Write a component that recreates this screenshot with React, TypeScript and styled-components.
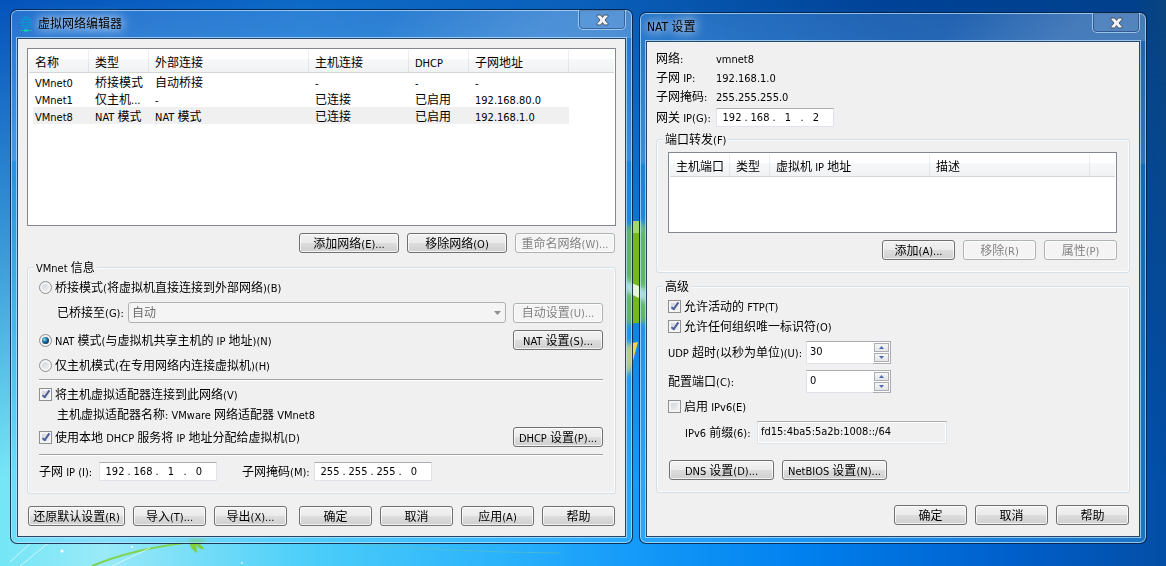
import React, { useState } from "react";
import styled, { createGlobalStyle, css } from "styled-components";

const GlobalStyle = createGlobalStyle`
  *, *::before, *::after { box-sizing: border-box; }
  body {
    margin: 0;
    color: #000;
    font: 12px/15px "DejaVu Sans Condensed", "Noto Sans CJK SC", sans-serif;
  }
  button, input, select { font: inherit; color: inherit; margin: 0; }
`;

/* ---------- Mixed Latin / Chinese text ---------- */

const Latin = styled.span`
  font-size: 11px;
`;

const Run = styled.span`
  display: inline-block;
  padding-top: 2px;
  white-space: pre;
`;

function Text({ children }: { children: string }) {
  const runs = children.split(/([\x20-\x7e]+)/).filter(Boolean);
  return (
    <Run>
      {runs.map((run, i) =>
        /^[\x20-\x7e]/.test(run) ? <Latin key={i}>{run}</Latin> : run
      )}
    </Run>
  );
}

/* ---------- Desktop ---------- */

const Desktop = styled.main`
  position: relative;
  min-height: 100vh;
  display: flex;
  align-items: flex-start;
  gap: 6px;
  padding: 9px 19px 20px 10px;
  background: linear-gradient(
    to right,
    #74e6f6 0%,
    #9aeaf8 9%,
    #4dcff9 26%,
    #2ab2fb 43%,
    #159bf9 54%,
    #0080ee 69%,
    #0060cc 86%,
    #034ea6 100%
  );

  &::before {
    content: "";
    position: absolute;
    inset: 0;
    background: linear-gradient(
      to right,
      #0452bb 0%,
      #0d68c6 26%,
      #0a5fba 50%,
      #004296 76%,
      #00408c 97%,
      #0a447e 100%
    );
    mask-image: linear-gradient(to bottom, #000 0%, rgba(0, 0, 0, 0.55) 42%, transparent 84%);
  }
`;

const Wallpaper = styled.svg`
  position: absolute;
  inset: 0;
  width: 100%;
  height: 100%;
`;

/* ---------- Window ---------- */

const Frame = styled.section<{ $grow: number; $drop?: number }>`
  position: relative;
  flex: ${(p) => p.$grow} 1 ${(p) => p.$grow}px;
  min-width: 0;
  margin-top: ${(p) => p.$drop ?? 0}px;
  padding: 0 6px 6px;
  border: 1px solid rgba(0, 20, 50, 0.8);
  border-radius: 7px;
  background:
    linear-gradient(120deg, transparent 60%, rgba(255, 255, 255, 0.16) 85%) 0 0 / 100% 28px no-repeat,
    linear-gradient(
      to bottom,
      rgba(130, 190, 255, 0.26) 0,
      rgba(140, 200, 255, 0.36) 150px,
      rgba(60, 170, 255, 0.34) 152px,
      rgba(90, 200, 255, 0.3) 100%
    );
  backdrop-filter: blur(3px);
  box-shadow: inset 0 0 0 1px rgba(190, 230, 255, 0.7);
`;

const TitleBar = styled.header<{ $indent: number }>`
  display: flex;
  align-items: center;
  height: 28px;
  padding-left: ${(p) => p.$indent}px;
`;

const Title = styled.h1`
  margin: 0;
  font-size: 12px;
  line-height: 17px;
  font-weight: normal;
  text-shadow: 0 0 8px rgba(255, 255, 255, 0.7), 0 0 12px rgba(255, 255, 255, 0.6),
    0 0 16px rgba(255, 255, 255, 0.6);
`;

const TitleIcon = styled.svg`
  width: 14px;
  height: 16px;
  margin-right: 5px;
`;

const CloseButton = styled.button`
  display: flex;
  align-items: center;
  justify-content: center;
  align-self: flex-start;
  width: 48px;
  height: 20px;
  margin-left: auto;
  padding: 0;
  border: 1px solid rgba(180, 215, 245, 0.75);
  border-top: 0;
  border-radius: 0 0 5px 5px;
  background: rgba(255, 255, 255, 0.07);
  box-shadow: inset 0 0 0 1px rgba(10, 40, 90, 0.45);
`;

const Client = styled.div<{ $pad: string }>`
  display: flex;
  flex-direction: column;
  padding: ${(p) => p.$pad};
  background: #f0f0f0;
  border: 1px solid rgba(5, 40, 80, 0.85);
  outline: 1px solid rgba(190, 230, 255, 0.7);
`;

/* ---------- Controls ---------- */

const PushButton = styled.button<{ $w: number }>`
  flex: none;
  width: ${(p) => p.$w}px;
  height: 20px;
  padding: 0;
  border: 1px solid #707070;
  border-radius: 3px;
  background: linear-gradient(to bottom, #f2f2f2 0%, #ebebeb 48%, #dddddd 52%, #cfcfcf 100%);
  box-shadow: inset 0 0 0 1px rgba(255, 255, 255, 0.75);
  white-space: nowrap;

  &:disabled {
    color: #838383;
    border-color: #adb2b5;
    background: #f4f4f4;
  }
`;

const tick = css`
  appearance: none;
  flex: none;
  position: relative;
  width: 13px;
  height: 13px;
  border: 1px solid #8e8f8f;
  background: linear-gradient(135deg, #cbcfd5, #f6f6f6);
  box-shadow: inset 0 0 0 2px #f4f4f4;
`;

const CheckBox = styled.input.attrs({ type: "checkbox" })`
  ${tick}
  &:checked::after {
    content: "";
    position: absolute;
    left: 4px;
    top: 0;
    width: 4px;
    height: 9px;
    border: solid #4b5f9b;
    border-width: 0 2px 2px 0;
    transform: rotate(35deg);
  }
`;

const RadioButton = styled.input.attrs({ type: "radio" })`
  ${tick}
  border-radius: 50%;
  &:checked::after {
    content: "";
    position: absolute;
    inset: 2px;
    border-radius: 50%;
    background: radial-gradient(circle at 35% 35%, #8fe0fa 0, #1c6ea0 40%, #0b2c49 85%);
  }
`;

const Choice = styled.label`
  display: flex;
  align-items: center;
  gap: 3px;
  white-space: nowrap;
`;

const edge = css`
  border: 1px solid #e2e3ea;
  border-top-color: #abadb3;
  background: #fff;
`;

const IpBox = styled.div`
  ${edge}
  display: flex;
  align-items: center;
  flex: none;
  width: 118px;
  height: 19px;
  padding-left: 3px;
  font-size: 11px;
`;

const Octet = styled.input`
  width: 24px;
  height: 17px;
  padding: 0;
  border: 0;
  outline: 0;
  background: none;
  text-align: center;
`;

const Dot = styled.span`
  width: 4px;
  text-align: center;
`;

function IpField({ id, label, value }: { id: string; label: string; value: string }) {
  return (
    <IpBox role="group" aria-label={label}>
      {value.split(".").map((part, i) => (
        <React.Fragment key={i}>
          {i > 0 && <Dot>.</Dot>}
          <Octet id={i === 0 ? id : undefined} aria-label={`${label} ${i + 1}`} defaultValue={part} />
        </React.Fragment>
      ))}
    </IpBox>
  );
}

const SelectBox = styled.div`
  position: relative;
  flex: 1;
  display: flex;

  svg {
    position: absolute;
    right: 5px;
    top: 9px;
    pointer-events: none;
  }
`;

const Select = styled.select`
  appearance: none;
  width: 100%;
  height: 21px;
  padding: 2px 3px 0;
  border: 1px solid #adb2b5;
  border-radius: 3px;
  background: #f4f4f4;
  color: #6d6d6d;
  opacity: 1;
`;

const SpinBox = styled.div`
  display: flex;
  flex: none;
  width: 85px;
  height: 23px;
`;

const SpinInput = styled.input`
  ${edge}
  flex: 1;
  min-width: 0;
  border-right: 0;
  padding: 0 3px 3px 3px;
  outline: 0;
  font-size: 11px;
`;

const SpinArrows = styled.div`
  display: flex;
  flex-direction: column;
  gap: 1px;
  width: 18px;
  padding: 1px;
  border: 1px solid #abadb3;
  border-left: 0;
  background: #fff;
`;

const SpinArrow = styled.button`
  display: flex;
  align-items: center;
  justify-content: center;
  flex: 1;
  padding: 0;
  border: 1px solid #abadb3;
  background: linear-gradient(#f6f6f6, #e4e5e8);
`;

function Spinner({ id, initial }: { id: string; initial: number }) {
  const [value, setValue] = useState(initial);
  return (
    <SpinBox>
      <SpinInput
        id={id}
        inputMode="numeric"
        value={value}
        onChange={(e) => setValue(Number(e.target.value) || 0)}
      />
      <SpinArrows>
        <SpinArrow type="button" aria-label="增加" onClick={() => setValue(value + 1)}>
          <svg width="5" height="3" viewBox="0 0 5 3"><path d="M0 3 2.500 0 5 3Z" fill="#4f67ad" /></svg>
        </SpinArrow>
        <SpinArrow type="button" aria-label="减少" onClick={() => setValue(Math.max(0, value - 1))}>
          <svg width="5" height="3" viewBox="0 0 5 3"><path d="M0 0 2.500 3 5 0Z" fill="#4f67ad" /></svg>
        </SpinArrow>
      </SpinArrows>
    </SpinBox>
  );
}

const ReadOnlyField = styled.input`
  width: 190px;
  height: 23px;
  padding: 0 3px 3px 3px;
  border: 1px solid #dbe2e8;
  border-top-color: #abadb3;
  background: #f0f0f0;
  box-shadow: inset 0 0 0 1px #fff;
  outline: 0;
  font-size: 11px;
`;

/* ---------- Grouping and rows ---------- */

const Group = styled.fieldset<{ $mt: number }>`
  min-width: 0;
  margin: ${(p) => p.$mt}px 0 0;
  padding: 0 12px 12px 11px;
  border: 1px solid #d5dfe5;
  border-radius: 3px;
  box-shadow: inset 0 0 0 1px #fbfcfc;
`;

const Legend = styled.legend`
  height: 17px;
  margin-left: -5px;
  padding: 0 2px;
  background: #f0f0f0;
`;

const Row = styled.div<{ $mt?: number; $h?: number; $indent?: number; $gap?: number }>`
  display: flex;
  align-items: center;
  height: ${(p) => p.$h ?? 20}px;
  margin-top: ${(p) => p.$mt ?? 0}px;
  padding-left: ${(p) => p.$indent ?? 0}px;
  gap: ${(p) => p.$gap ?? 8}px;
  white-space: nowrap;
`;

const ButtonRow = styled.div<{ $mt: number; $inset?: number }>`
  display: flex;
  justify-content: flex-end;
  gap: 8px;
  margin-top: ${(p) => p.$mt}px;
  padding: 0 ${(p) => p.$inset ?? 0}px;
`;

const FooterRow = styled(ButtonRow)`
  justify-content: space-between;
`;

const ButtonSet = styled.div`
  display: flex;
  gap: 8px;
`;

const Push = styled.div`
  margin-left: auto;
  display: flex;
`;

const Separator = styled.hr<{ $mt: number }>`
  height: 2px;
  margin: ${(p) => p.$mt}px 0 0;
  border: 0;
  border-top: 1px solid #a0a0a0;
  background: #fff;
`;

const FieldLabel = styled.label<{ $w: number }>`
  flex: none;
  width: ${(p) => p.$w}px;
`;

const InfoList = styled.dl`
  display: grid;
  grid-template-columns: 60px 1fr;
  grid-auto-rows: 19px;
  align-items: center;
  margin: 0;

  dd { margin: 0; }
`;

/* ---------- List view ---------- */

const ListFrame = styled.div<{ $h: number; $mt?: number }>`
  height: ${(p) => p.$h}px;
  margin-top: ${(p) => p.$mt ?? 0}px;
  padding: 1px;
  border: 1px solid #828790;
  background: #fff;
`;

const Table = styled.table`
  width: 100%;
  table-layout: fixed;
  border-collapse: separate;
  border-spacing: 0;
`;

const HeadCell = styled.th`
  height: 23px;
  padding: 2px 0 0 6px;
  border-bottom: 1px solid #d5d5d5;
  background:
    linear-gradient(#f0f0f0, #dfe0e1) right / 1px 100% no-repeat,
    linear-gradient(to bottom, #fff 0 40%, #f7f8fa 42%, #f1f2f4 100%);
  font-weight: normal;
  text-align: left;
  white-space: nowrap;

  &:last-child {
    background: linear-gradient(to bottom, #fff 0 40%, #f7f8fa 42%, #f1f2f4 100%);
  }
`;

const Cell = styled.td`
  height: 17px;
  padding: 0 0 0 6px;
  overflow: hidden;
  line-height: 13px;
  white-space: nowrap;

  ${Run} { padding-top: 4px; }
`;

const BodyRow = styled.tr<{ $selected?: boolean }>`
  ${(p) =>
    p.$selected &&
    css`
      ${Cell} { background: #f0f0f0; }
      ${Cell}:first-child { background: linear-gradient(to right, #fff 4px, #f0f0f0 4px); }
      ${Cell}:last-child { background: none; }
    `}
`;

function ListView(props: {
  height: number;
  mt?: number;
  columns: [string, number][];
  rows: string[][];
  selected?: number;
}) {
  return (
    <ListFrame $h={props.height} $mt={props.mt}>
      <Table>
        <colgroup>
          {props.columns.map(([name, width]) => <col key={name} width={width} />)}
          <col />
        </colgroup>
        <thead>
          <tr>
            {props.columns.map(([name]) => <HeadCell key={name}><Text>{name}</Text></HeadCell>)}
            <HeadCell />
          </tr>
        </thead>
        <tbody>
          {props.rows.map((row, i) => (
            <BodyRow key={row[0]} $selected={i === props.selected}>
              {row.map((cell, j) => <Cell key={j}><Text>{cell}</Text></Cell>)}
              <Cell />
            </BodyRow>
          ))}
        </tbody>
      </Table>
    </ListFrame>
  );
}

function Button({ w, disabled, children }: { w: number; disabled?: boolean; children: string }) {
  return (
    <PushButton type="button" $w={w} disabled={disabled}>
      <Text>{children}</Text>
    </PushButton>
  );
}

function Close() {
  return (
    <CloseButton type="button" aria-label="关闭">
      <svg width="13" height="12" viewBox="0 0 13 12">
        <path
          d="M1 1h3.800L6.500 3.400 8.200 1H12V2.500L9 6 12 9.500V11H8.200L6.500 8.600 4.800 11H1V9.500L4 6 1 2.500Z"
          fill="#f4f4f4"
          stroke="#46526a"
          strokeLinejoin="round"
        />
      </svg>
    </CloseButton>
  );
}

function Globe() {
  return (
    <TitleIcon viewBox="0 0 14 16" fill="none" stroke="#0795d3">
      <circle cx="7" cy="6.500" r="5.500" />
      <ellipse cx="7" cy="6.500" rx="2.600" ry="5.500" />
      <path d="M1.500 6.500h11M2.500 3.500h9M2.500 9.500h9" />
      <path d="M1 14.500h12" stroke="#10b5a0" />
      <path d="M5 14.500h4" stroke="#18d0b8" strokeWidth="2" />
    </TitleIcon>
  );
}

/* ---------- Screens ---------- */

const networkColumns: [string, number][] = [
  ["名称", 60], ["类型", 60], ["外部连接", 160], ["主机连接", 100], ["DHCP", 60], ["子网地址", 100],
];

const networks = [
  ["VMnet0", "桥接模式", "自动桥接", "-", "-", "-"],
  ["VMnet1", "仅主机...", "-", "已连接", "已启用", "192.168.80.0"],
  ["VMnet8", "NAT 模式", "NAT 模式", "已连接", "已启用", "192.168.1.0"],
];

const forwardColumns: [string, number][] = [
  ["主机端口", 60], ["类型", 40], ["虚拟机 IP 地址", 160], ["描述", 160],
];

function NetworkEditor() {
  return (
    <Frame $grow={623}>
      <TitleBar $indent={2}>
        <Globe />
        <Title>虚拟网络编辑器</Title>
        <Close />
      </TitleBar>
      <Client $pad="9px 9px 10px 9px">
        <ListView height={178} columns={networkColumns} rows={networks} selected={2} />
        <ButtonRow $mt={7} $inset={1}>
          <Button w={100}>添加网络(E)...</Button>
          <Button w={100}>移除网络(O)</Button>
          <Button w={100} disabled>重命名网络(W)...</Button>
        </ButtonRow>

        <Group $mt={6}>
          <Legend><Text>VMnet 信息</Text></Legend>
          <Row $mt={1}>
            <Choice><RadioButton name="mode" /><Text>桥接模式(将虚拟机直接连接到外部网络)(B)</Text></Choice>
          </Row>
          <Row $mt={5} $h={21} $indent={18} $gap={0}>
            <FieldLabel htmlFor="bridge" $w={71}><Text>已桥接至(G):</Text></FieldLabel>
            <SelectBox>
              <Select id="bridge" disabled><option>自动</option></Select>
              <svg width="7" height="4" viewBox="0 0 7 4"><path d="M0 0h7L3.500 4Z" fill="#8a8f94" /></svg>
            </SelectBox>
            <Row $indent={7}><Button w={90} disabled>自动设置(U)...</Button></Row>
          </Row>
          <Row $mt={7}>
            <Choice><RadioButton name="mode" defaultChecked /><Text>NAT 模式(与虚拟机共享主机的 IP 地址)(N)</Text></Choice>
            <Push><Button w={90}>NAT 设置(S)...</Button></Push>
          </Row>
          <Row $mt={5}>
            <Choice><RadioButton name="mode" /><Text>仅主机模式(在专用网络内连接虚拟机)(H)</Text></Choice>
          </Row>
          <Separator $mt={4} />
          <Row $mt={5} $h={17}>
            <Choice><CheckBox defaultChecked /><Text>将主机虚拟适配器连接到此网络(V)</Text></Choice>
          </Row>
          <Row $mt={3} $h={17} $indent={18}>
            <Text>主机虚拟适配器名称: VMware 网络适配器 VMnet8</Text>
          </Row>
          <Row $mt={4}>
            <Choice><CheckBox defaultChecked /><Text>使用本地 DHCP 服务将 IP 地址分配给虚拟机(D)</Text></Choice>
            <Push><Button w={90}>DHCP 设置(P)...</Button></Push>
          </Row>
          <Separator $mt={7} />
          <Row $mt={6} $h={19} $gap={0}>
            <FieldLabel htmlFor="subnet-ip" $w={60}><Text>子网 IP (I):</Text></FieldLabel>
            <IpField id="subnet-ip" label="子网 IP" value="192.168.1.0" />
            <Row $h={19} $indent={25} $gap={0}>
              <FieldLabel htmlFor="subnet-mask" $w={72}><Text>子网掩码(M):</Text></FieldLabel>
              <IpField id="subnet-mask" label="子网掩码" value="255.255.255.0" />
            </Row>
          </Row>
        </Group>

        <FooterRow $mt={12} $inset={1}>
          <ButtonSet>
            <Button w={97}>还原默认设置(R)</Button>
            <Button w={73}>导入(T)...</Button>
            <Button w={73}>导出(X)...</Button>
          </ButtonSet>
          <ButtonSet>
            <Button w={73}>确定</Button>
            <Button w={73}>取消</Button>
            <Button w={73}>应用(A)</Button>
            <Button w={73}>帮助</Button>
          </ButtonSet>
        </FooterRow>
      </Client>
    </Frame>
  );
}

function NatSettings() {
  return (
    <Frame $grow={508} $drop={3}>
      <TitleBar $indent={1}>
        <Title>NAT 设置</Title>
        <Close />
      </TitleBar>
      <Client $pad="7px 9px 11px 9px">
        <InfoList>
          <dt><Text>网络:</Text></dt><dd><Text>vmnet8</Text></dd>
          <dt><Text>子网 IP:</Text></dt><dd><Text>192.168.1.0</Text></dd>
          <dt><Text>子网掩码:</Text></dt><dd><Text>255.255.255.0</Text></dd>
        </InfoList>
        <Row $mt={2} $h={19} $gap={0}>
          <FieldLabel htmlFor="gateway" $w={60}><Text>网关 IP(G):</Text></FieldLabel>
          <IpField id="gateway" label="网关 IP" value="192.168.1.2" />
        </Row>

        <Group $mt={4}>
          <Legend><Text>端口转发(F)</Text></Legend>
          <ListView height={81} mt={4} columns={forwardColumns} rows={[]} />
          <ButtonRow $mt={7}>
            <Button w={73}>添加(A)...</Button>
            <Button w={73} disabled>移除(R)</Button>
            <Button w={73} disabled>属性(P)</Button>
          </ButtonRow>
        </Group>

        <Group $mt={5}>
          <Legend><Text>高级</Text></Legend>
          <Row $mt={3} $h={17}>
            <Choice><CheckBox defaultChecked /><Text>允许活动的 FTP(T)</Text></Choice>
          </Row>
          <Row $mt={3} $h={17}>
            <Choice><CheckBox defaultChecked /><Text>允许任何组织唯一标识符(O)</Text></Choice>
          </Row>
          <Row $mt={6} $h={23} $gap={0}>
            <FieldLabel htmlFor="udp" $w={138}><Text>UDP 超时(以秒为单位)(U):</Text></FieldLabel>
            <Spinner id="udp" initial={30} />
          </Row>
          <Row $mt={6} $h={23} $gap={0}>
            <FieldLabel htmlFor="port" $w={138}><Text>配置端口(C):</Text></FieldLabel>
            <Spinner id="port" initial={0} />
          </Row>
          <Row $mt={5} $h={17}>
            <Choice><CheckBox /><Text>启用 IPv6(E)</Text></Choice>
          </Row>
          <Row $mt={6} $h={23} $indent={17} $gap={0}>
            <FieldLabel htmlFor="prefix" $w={72}><Text>IPv6 前缀(6):</Text></FieldLabel>
            <ReadOnlyField id="prefix" readOnly value="fd15:4ba5:5a2b:1008::/64" />
          </Row>
          <Row $mt={16} $indent={1}>
            <Button w={105}>DNS 设置(D)...</Button>
            <Button w={105}>NetBIOS 设置(N)...</Button>
          </Row>
        </Group>

        <ButtonRow $mt={12} $inset={1}>
          <Button w={73}>确定</Button>
          <Button w={73}>取消</Button>
          <Button w={73}>帮助</Button>
        </ButtonRow>
      </Client>
    </Frame>
  );
}

export default function App() {
  return (
    <>
      <GlobalStyle />
      <Desktop>
        <Wallpaper viewBox="0 0 1166 566" preserveAspectRatio="none" aria-hidden="true">
          <path d="M570 250Q634 205 700 240V310Q640 330 570 322Z" fill="#74b81c" />
          <rect x="633" y="221" width="9" height="12" fill="#a3d86a" />
          <path d="M570 270Q620 285 700 330V314Q640 285 570 258Z" fill="#e6f5d8" />
          <path d="M638 342 620 345 600 385 630 372Z" fill="#f2d44c" />
          <path d="M92 566Q130 550 184 543" fill="none" stroke="#7fd552" strokeWidth="2" />
          <path d="M189 540Q190 550 197 553 197 547 195 544 199 550 204 549 201 544 198 543L205 542V539Z" fill="#7fcf3c" />
          <path d="M20 566 52 540M10 562 34 540M112 566 150 548" stroke="#fff" strokeOpacity=".6" fill="none" />
          <path d="M345 543Q450 552 560 553" stroke="#5dbfc0" strokeOpacity=".6" fill="none" />
          <circle cx="62" cy="551" r="1.500" fill="#fff" />
          <circle cx="132" cy="547" r="1" fill="#fff" />
          <circle cx="242" cy="563" r="1" fill="#d0f4ff" />
        </Wallpaper>
        <NetworkEditor />
        <NatSettings />
      </Desktop>
    </>
  );
}
